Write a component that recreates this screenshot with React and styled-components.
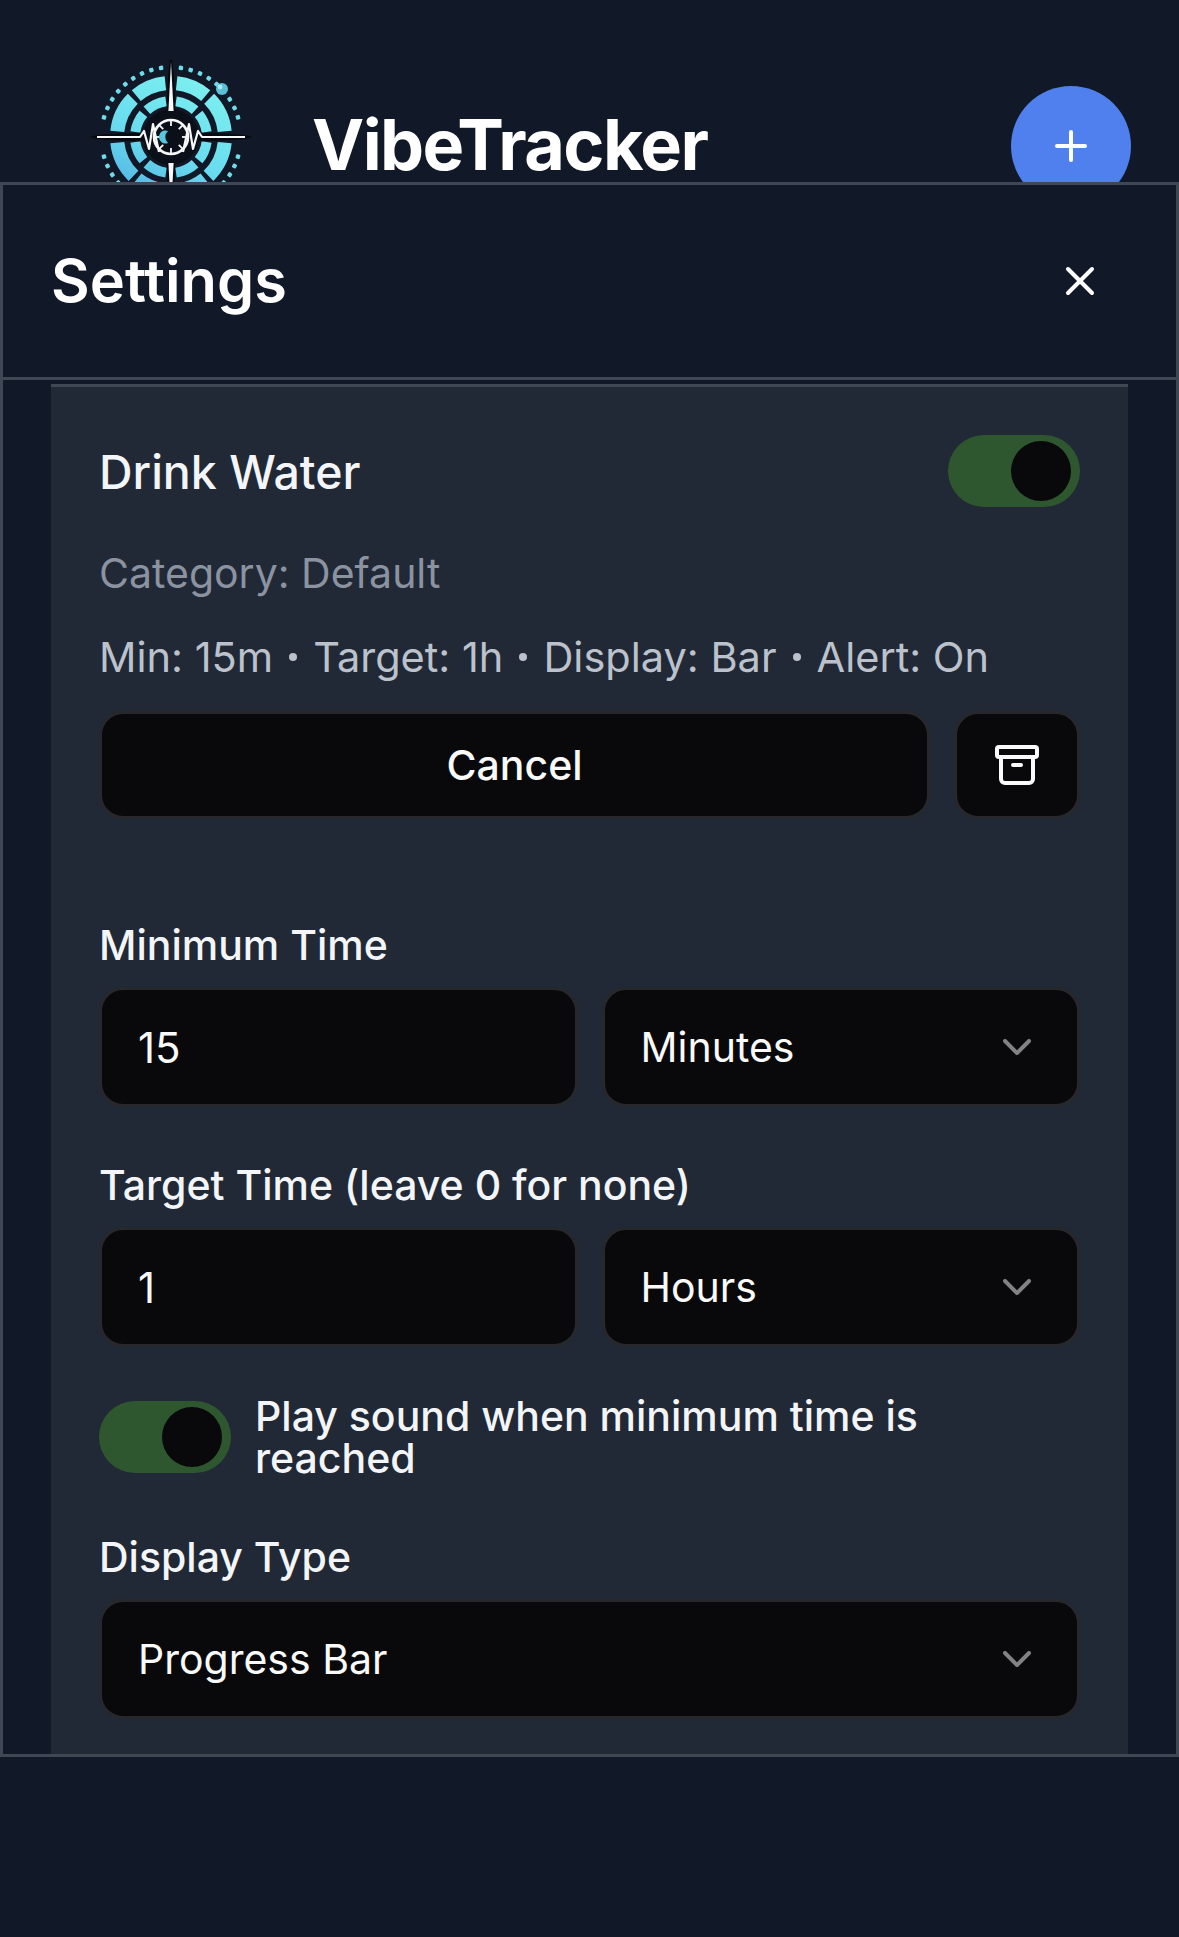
import React from 'react'
import styled, { createGlobalStyle } from 'styled-components'
import { Archive, ChevronDown, Plus, X } from 'lucide-react'

const GlobalStyle = createGlobalStyle`
    html, body {
        margin: 0;
        background: #111827;
    }
    * {
        box-sizing: border-box;
    }
    body {
        font-family: Inter, "Noto Sans", sans-serif;
    }
`

const Page = styled.div`
    position: relative;
    height: 1937px;
    overflow: hidden;
    background: #111827;
`
const Header = styled.header`
    display: flex;
    align-items: flex-start;
    padding: 47px 48px 0 81px;
`
const LogoMark = styled.svg`
    flex: none;
    width: 180px;
    height: 180px;
`
const AppTitle = styled.h1`
    margin: 50px 0 0 51px;
    font-size: 70px;
    line-height: 96px;
    font-weight: 700;
    letter-spacing: -1.6px;
    color: #fff;
`
const AddButton = styled.button`
    display: flex;
    align-items: center;
    justify-content: center;
    width: 120px;
    height: 120px;
    margin: 39px 0 0 auto;
    padding: 0;
    border: 0;
    border-radius: 50%;
    background: #4f80ee;
    color: #fff;
`
const Dialog = styled.section`
    position: absolute;
    top: 182px;
    left: 0;
    right: 0;
    height: 1575px;
    display: flex;
    flex-direction: column;
    background: #111827;
    border: 3px solid #3f4654;
`
const DialogHeader = styled.div`
    flex: none;
    display: flex;
    align-items: center;
    justify-content: space-between;
    height: 195px;
    padding: 0 72px 0 48px;
    border-bottom: 3px solid #3f4654;
`
const DialogTitle = styled.h2`
    margin: 0 0 2px;
    font-size: 59.5px;
    line-height: 84px;
    font-weight: 600;
    color: #fff;
`
const CloseButton = styled.button`
    display: flex;
    padding: 0;
    border: 0;
    background: none;
    color: #fff;
`
const DialogBody = styled.div`
    flex: 1;
    min-height: 0;
    overflow: hidden;
    padding: 4px 48px 0;
`
const Card = styled.article`
    padding: 48px 48px 96px;
    background: #212936;
    border-top: 3px solid #3f4654;
`
const CardTop = styled.div`
    display: flex;
    align-items: center;
    justify-content: space-between;
`
const HabitName = styled.h3`
    margin: 2px 0 0;
    font-size: 46.5px;
    line-height: 70px;
    font-weight: 500;
    color: #f3f5f9;
`
const Track = styled.span`
    flex: none;
    display: flex;
    align-items: center;
    justify-content: flex-end;
    width: 132px;
    height: 72px;
    padding-right: 9px;
    border-radius: 36px;
    background: #2e5730;
`
const Knob = styled.span`
    width: 60px;
    height: 60px;
    border-radius: 50%;
    background: #09090b;
`
const Category = styled.p`
    margin: 36px 0 0;
    font-size: 41px;
    line-height: 60px;
    color: #8b93a1;
`
const Meta = styled.p`
    display: flex;
    align-items: center;
    gap: 16px;
    margin: 24px 0 0;
    font-size: 41.5px;
    line-height: 60px;
    color: #bcc2cc;
`
const Dot = styled.span`
    flex: none;
    width: 8px;
    height: 8px;
    border-radius: 50%;
    background: #bcc2cc;
`
const ActionRow = styled.div`
    display: flex;
    gap: 24px;
    margin-top: 24px;
`
const Control = styled.button`
    display: flex;
    align-items: center;
    height: ${p => p.$short ? 108 : 120}px;
    border: 3px solid #27282b;
    border-radius: 24px;
    background: #09090b;
    color: #fafafa;
    font-family: inherit;
    font-size: 41px;
    font-weight: ${p => p.$strong ? 500 : 400};
`
const CancelButton = styled(Control)`
    flex: 1;
    justify-content: center;
`
const ArchiveButton = styled(Control)`
    flex: none;
    justify-content: center;
    width: 126px;
    padding: 0;
`
const Field = styled.div`
    margin-top: ${p => p.$top}px;
`
const Label = styled.label`
    display: block;
    margin-bottom: 12px;
    font-size: 41px;
    line-height: 60px;
    font-weight: 500;
    color: #f3f5f9;
`
const TwoCols = styled.div`
    display: grid;
    grid-template-columns: 1fr 1fr;
    gap: 24px;
`
const NumberInput = styled.input`
    width: 100%;
    height: 120px;
    padding: 0 36px;
    border: 3px solid #27282b;
    border-radius: 24px;
    background: #09090b;
    color: #fafafa;
    font-family: inherit;
    font-size: 42px;
    outline: none;
`
const SelectBox = styled(Control)`
    justify-content: space-between;
    width: 100%;
    padding: 0 36px;
`
const Chevron = styled(ChevronDown)`
    flex: none;
    opacity: 0.5;
`
const SoundRow = styled.div`
    display: flex;
    align-items: center;
    gap: 24px;
    margin-top: 48px;
`
const SoundText = styled.span`
    font-size: 41px;
    line-height: 42px;
    font-weight: 500;
    color: #f3f5f9;
`

const arc = (r, from, to) => {
    const pt = a => {
        const rad = (a - 90) * Math.PI / 180
        return `${(r * Math.cos(rad)).toFixed(2)} ${(r * Math.sin(rad)).toFixed(2)}`
    }
    return `M${pt(from)}A${r} ${r} 0 ${to - from > 180 ? 1 : 0} 1 ${pt(to)}`
}

const outerRing = [[6, 40], [45, 84], [96, 136], [141, 174], [186, 219], [224, 264], [276, 315], [320, 354]]
const innerRing = [[8, 42], [50, 82], [98, 130], [138, 172], [188, 222], [230, 262], [278, 310], [318, 352]]
const dots = Array.from({ length: 44 }, (_, i) => i * 360 / 44)
    .filter(a => Math.abs(a - 90) > 12 && Math.abs(a - 270) > 12 && a > 8 && a < 352)
const ticks = [0, 45, 90, 135, 180, 225, 270, 315]

const Logo = () => (
    <LogoMark viewBox="-90 -90 180 180" aria-hidden="true">
        <defs>
            <linearGradient id="ringFill" gradientUnits="userSpaceOnUse" x1="30" y1="-60" x2="-30" y2="60">
                <stop offset="0" stopColor="#7df0f0" />
                <stop offset="0.6" stopColor="#68dcee" />
                <stop offset="1" stopColor="#55b4e4" />
            </linearGradient>
        </defs>
        {dots.map(a => (
            <rect key={a} x="-2.2" y="-72" width="4.4" height="4.4" rx="1.2" fill="#6fdcea"
                transform={`rotate(${a})`} />
        ))}
        {outerRing.map(([from, to]) => (
            <path key={from} d={arc(54, from, to)} fill="none" stroke="url(#ringFill)" strokeWidth="14" />
        ))}
        {innerRing.map(([from, to]) => (
            <path key={from} d={arc(36, from, to)} fill="none" stroke="url(#ringFill)" strokeWidth="10" />
        ))}
        <circle cx="51" cy="-48" r="6" fill="#5bbfd8" />
        <circle cx="49" cy="-50" r="2.4" fill="#a6ecf2" />
        <ellipse cx="0" cy="0" rx="80" ry="4.5" fill="#070a10" />
        <ellipse cx="0" cy="0" rx="4.5" ry="78" fill="#070a10" />
        <circle cx="0" cy="0" r="28" fill="#0b0f18" />
        <path d="M0 -75L2.6 -26H-2.6Z" fill="#f5f7f8" />
        <path d="M0 75L2.6 26H-2.6Z" fill="#f5f7f8" />
        <circle cx="0" cy="0" r="17" fill="none" stroke="#f5f7f8" strokeWidth="2.6" />
        {ticks.map(a => (
            <rect key={a} x="-0.9" y="-17" width="1.8" height="6" fill="#f5f7f8" transform={`rotate(${a})`} />
        ))}
        <path d="M3 -6A6.5 6.5 0 1 1 3 6A8 8 0 0 0 3 -6Z" fill="#55c8e0" transform="rotate(180)" />
        <path
            d="M-74 0H-31L-27 -6L-22 12L-18 -13L-12 15M74 0H31L27 -6L22 12L18 -13L12 15"
            fill="none"
            stroke="#f5f7f8"
            strokeWidth="2.2"
            strokeLinejoin="round"
        />
    </LogoMark>
)

const Switch = () => (
    <Track>
        <Knob />
    </Track>
)

const Select = ({ children }) => (
    <SelectBox type="button">
        {children}
        <Chevron size={48} strokeWidth={2} />
    </SelectBox>
)

const App = () => {
    return <Page>
        <GlobalStyle />
        <Header>
            <Logo />
            <AppTitle>VibeTracker</AppTitle>
            <AddButton type="button"><Plus size={48} strokeWidth={2} /></AddButton>
        </Header>
        <Dialog>
            <DialogHeader>
                <DialogTitle>Settings</DialogTitle>
                <CloseButton type="button"><X size={48} strokeWidth={2} /></CloseButton>
            </DialogHeader>
            <DialogBody>
                <Card>
                    <CardTop>
                        <HabitName>Drink Water</HabitName>
                        <Switch />
                    </CardTop>
                    <Category>Category: Default</Category>
                    <Meta>
                        <span>Min: 15m</span><Dot />
                        <span>Target: 1h</span><Dot />
                        <span>Display: Bar</span><Dot />
                        <span>Alert: On</span>
                    </Meta>
                    <ActionRow>
                        <CancelButton type="button" $short $strong>Cancel</CancelButton>
                        <ArchiveButton type="button" $short><Archive size={48} strokeWidth={2} /></ArchiveButton>
                    </ActionRow>
                    <Field $top={96}>
                        <Label>Minimum Time</Label>
                        <TwoCols>
                            <NumberInput defaultValue="15" />
                            <Select>Minutes</Select>
                        </TwoCols>
                    </Field>
                    <Field $top={48}>
                        <Label>Target Time (leave 0 for none)</Label>
                        <TwoCols>
                            <NumberInput defaultValue="1" />
                            <Select>Hours</Select>
                        </TwoCols>
                    </Field>
                    <SoundRow>
                        <Switch />
                        <SoundText>Play sound when minimum time is reached</SoundText>
                    </SoundRow>
                    <Field $top={48}>
                        <Label>Display Type</Label>
                        <Select>Progress Bar</Select>
                    </Field>
                </Card>
            </DialogBody>
        </Dialog>
    </Page>
}

export default App
